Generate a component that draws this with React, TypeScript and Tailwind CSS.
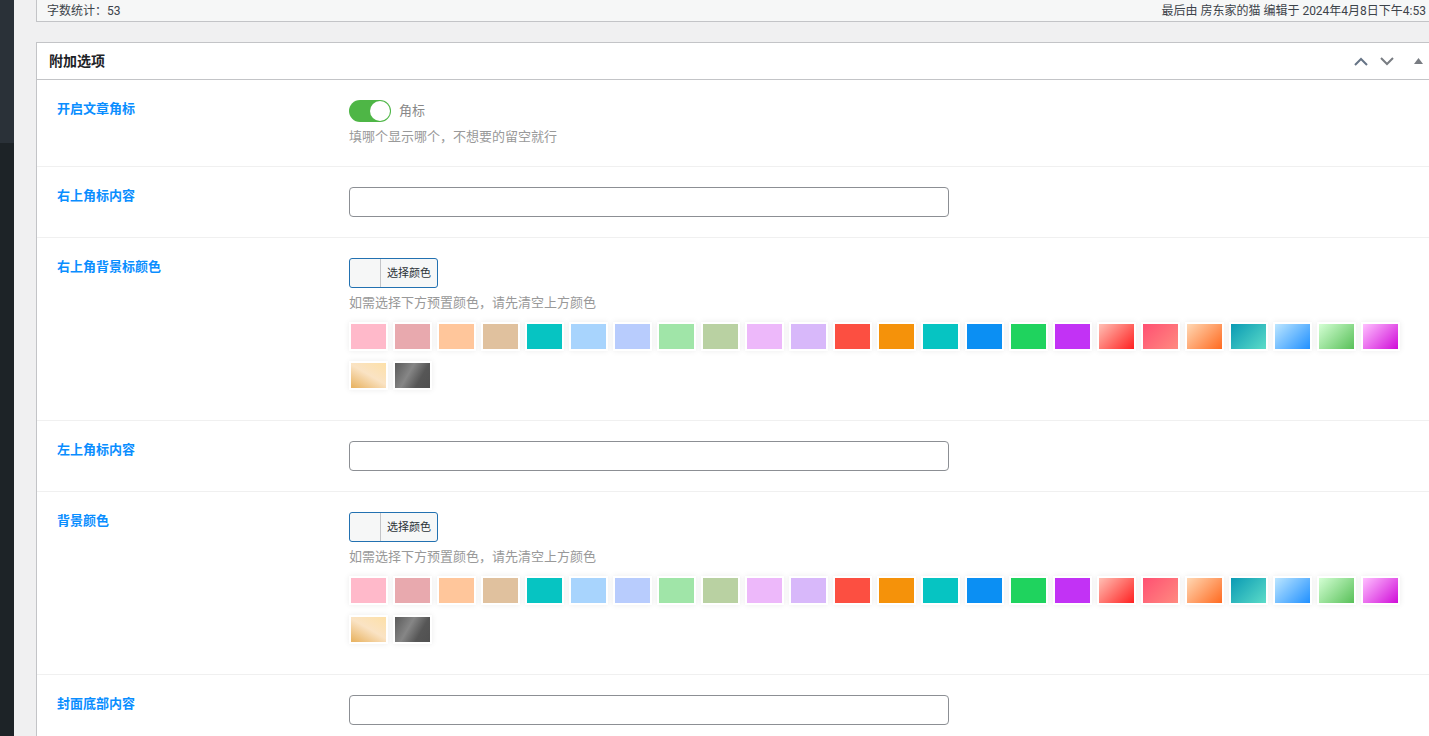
const swatches = [
  "bg-[#ffb9ca]",
  "bg-[#e8a9ae]",
  "bg-[#ffc69b]",
  "bg-[#e0c19e]",
  "bg-[#06c4c2]",
  "bg-[#a8d4fd]",
  "bg-[#b8ccfd]",
  "bg-[#a0e5a8]",
  "bg-[#b9d1a2]",
  "bg-[#edb8fa]",
  "bg-[#d8b8fa]",
  "bg-[#fc4f41]",
  "bg-[#f5920a]",
  "bg-[#06c4c2]",
  "bg-[#0b8ff3]",
  "bg-[#1fd35e]",
  "bg-[#c232f5]",
  "bg-[linear-gradient(135deg,#ffc0b5,#ff2020)]",
  "bg-[linear-gradient(135deg,#ff5072,#ff8a80)]",
  "bg-[linear-gradient(135deg,#ffd8b4,#ff6a20)]",
  "bg-[linear-gradient(135deg,#0a9ab4,#5cdcc8)]",
  "bg-[linear-gradient(135deg,#bce6ff,#2090ff)]",
  "bg-[linear-gradient(135deg,#d4ffd4,#58c058)]",
  "bg-[linear-gradient(135deg,#ffc0ff,#d00cd8)]",
  "bg-[linear-gradient(30deg,#e9b566_5%,#fae3c4_52%,#fde0a8_100%)]",
  "bg-[linear-gradient(120deg,#5a5a5a_0%,#868686_40%,#565656_70%,#505050_100%)]",
];

function Label({ children }: { children: string }) {
  return <div className="-mt-px w-[292px] shrink-0 text-[13px] leading-[18px] font-bold text-[#0a8eff]">{children}</div>;
}

function TextRow({ label }: { label: string }) {
  return (
    <div className="flex border-b border-[#f0f0f0] pt-5 pb-5 pl-5">
      <Label>{label}</Label>
      <input type="text" className="h-[30px] w-[600px] rounded border border-[#8c8f94] bg-white" />
    </div>
  );
}

function ColorRow({ label }: { label: string }) {
  return (
    <div className="flex border-b border-[#f0f0f0] pt-5 pb-[30px] pl-5">
      <Label>{label}</Label>
      <div className="w-[1070px]">
        <div className="flex h-[30px] w-[89px] items-center rounded-[3px] border border-[#2271b1] bg-[#f6f7f7]">
          <div className="h-full w-[31px] border-r border-[#c3c4c7]" />
          <span className="pl-[6px] text-[11px] text-[#2c3338]">选择颜色</span>
        </div>
        <p className="mt-[5px] text-[13px] leading-[18px] text-[#999]">如需选择下方预置颜色，请先清空上方颜色</p>
        <div className="mt-[11px] flex flex-wrap gap-x-[5px] gap-y-[10px]">
          {swatches.map((swatch, i) => (
            <div key={i} className="h-[29px] w-[39px] bg-white p-[2px] shadow-[0_0_6px_rgba(0,0,0,0.08)]">
              <div className={`h-full w-full ${swatch}`} />
            </div>
          ))}
        </div>
      </div>
    </div>
  );
}

export default function App() {
  return (
    <div className="flex h-[736px] overflow-hidden bg-[#f0f0f1] font-['Noto_Sans','Noto_Sans_CJK_SC',sans-serif]">
      {/* Admin sidebar edge */}
      <div className="flex w-[14px] shrink-0 flex-col">
        <div className="h-[143px] bg-[#2a3138]" />
        <div className="flex-1 bg-[#1d2327]" />
      </div>

      <div className="min-w-0 flex-1 pl-[22px]">
        {/* Editor status bar */}
        <div className="flex h-[22px] w-[1400px] items-center justify-between border-x border-b border-[#c3c4c7] bg-[#f6f7f7] pr-[9px] pl-[10px] font-['Roboto','Noto_Sans_CJK_SC',sans-serif] text-xs text-[#3c434a]">
          <span>字数统计：53</span>
          <span>最后由 房东家的猫 编辑于 2024年4月8日下午4:53</span>
        </div>

        {/* Meta box */}
        <div className="mt-5 w-[1400px] border border-[#c3c4c7] bg-white">
          <div className="flex h-[37px] items-center justify-between border-b border-[#c3c4c7] pr-3 pl-3">
            <h2 className="text-sm font-semibold text-[#1d2327]">附加选项</h2>
            <div className="flex items-center">
              <svg width="14" height="9" viewBox="0 0 14 9" fill="none" stroke="#667486" strokeWidth="2" className="mr-3">
                <path d="M1 8l6-6 6 6" />
              </svg>
              <svg width="14" height="9" viewBox="0 0 14 9" fill="none" stroke="#787c82" strokeWidth="2" className="mr-5">
                <path d="M1 1l6 6 6-6" />
              </svg>
              <svg width="9" height="6" viewBox="0 0 9 6" fill="#787c82">
                <path d="M4.5 0L9 6H0z" />
              </svg>
            </div>
          </div>

          <div className="border-b border-[#f0f0f0] pt-5 pb-[21px] pl-5">
            <div className="flex">
              <Label>开启文章角标</Label>
              <div>
                <div className="flex items-center">
                  <div className="flex h-[22px] w-[42px] items-center justify-end rounded-full bg-[#4eb646] pr-px">
                    <div className="h-5 w-5 rounded-full bg-white" />
                  </div>
                  <span className="ml-2 text-[13px] text-[#888]">角标</span>
                </div>
                <p className="mt-[5px] text-[13px] leading-[18px] text-[#999]">填哪个显示哪个，不想要的留空就行</p>
              </div>
            </div>
          </div>

          <TextRow label="右上角标内容" />
          <ColorRow label="右上角背景标颜色" />
          <TextRow label="左上角标内容" />
          <ColorRow label="背景颜色" />
          <TextRow label="封面底部内容" />
        </div>
      </div>
    </div>
  );
}
